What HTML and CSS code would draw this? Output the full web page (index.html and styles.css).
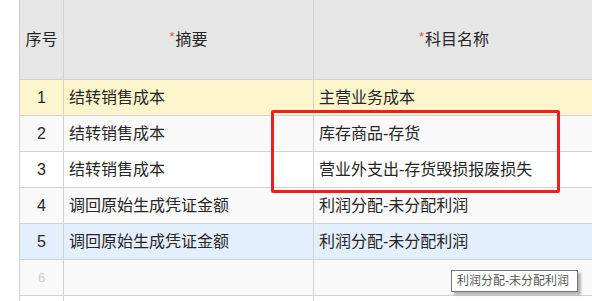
FILE: index.html
```html
<!DOCTYPE html>
<html lang="zh-CN">
<head>
<meta charset="utf-8">
<title>凭证分录</title>
<link rel="stylesheet" href="styles.css">
</head>
<body>
<div class="sheet">
  <div class="grid">
    <div class="row head">
      <div class="cell c1">序号</div>
      <div class="cell c2"><span class="req">*</span>摘要</div>
      <div class="cell c3"><span class="req">*</span>科目名称</div>
    </div>
    <div class="row hl">
      <div class="cell c1 num">1</div>
      <div class="cell c2">结转销售成本</div>
      <div class="cell c3">主营业务成本</div>
    </div>
    <div class="row even">
      <div class="cell c1 num">2</div>
      <div class="cell c2">结转销售成本</div>
      <div class="cell c3">库存商品-存货</div>
    </div>
    <div class="row">
      <div class="cell c1 num">3</div>
      <div class="cell c2">结转销售成本</div>
      <div class="cell c3">营业外支出-存货毁损报废损失</div>
    </div>
    <div class="row even">
      <div class="cell c1 num">4</div>
      <div class="cell c2">调回原始生成凭证金额</div>
      <div class="cell c3">利润分配-未分配利润</div>
    </div>
    <div class="row sel">
      <div class="cell c1 num">5</div>
      <div class="cell c2">调回原始生成凭证金额</div>
      <div class="cell c3">利润分配-未分配利润</div>
    </div>
    <div class="row even">
      <div class="cell c1 num empty">6</div>
      <div class="cell c2"></div>
      <div class="cell c3"></div>
    </div>
    <div class="row">
      <div class="cell c1 num empty"></div>
      <div class="cell c2"></div>
      <div class="cell c3"></div>
    </div>
  </div>
  <div class="mark"></div>
  <div class="tip">利润分配-未分配利润</div>
</div>
</body>
</html>
```

FILE: styles.css
```css
html, body {
  margin: 0;
  padding: 0;
  background: #ffffff;
  overflow: hidden;
}

.sheet {
  position: relative;
  width: 592px;
  height: 301px;
  overflow: hidden;
  font-family: "Liberation Sans", "Noto Sans CJK SC", sans-serif;
  font-size: 16px;
  color: #262626;
}

.grid {
  margin-left: 19px;
  width: 575px;
  border-left: 1px solid #d2d2d2;
}

.row {
  display: grid;
  grid-template-columns: 44px 250px 281px;
  height: 36px;
}

.cell {
  box-sizing: border-box;
  border-right: 1px solid #d2d2d2;
  border-bottom: 1px solid #d2d2d2;
  display: flex;
  align-items: center;
  padding-left: 5px;
  line-height: 18px;
  white-space: nowrap;
}

.row.head {
  height: 80px;
  background: #e6e6e6;
}

.row.head .cell {
  justify-content: center;
  padding-left: 0;
}

.req {
  color: #f5455f;
  font-size: 13px;
  align-self: flex-start;
  margin-top: 30px;
  margin-right: 1px;
  line-height: 13px;
}

.num {
  justify-content: center;
  padding-left: 0;
}

.num.empty {
  color: #cfcfcf;
  font-size: 13px;
}

.row.even { background: #f9f9f9; }
.row.hl { background: #fdf5cc; }
.row.sel { background: #e3effd; }

.mark {
  position: absolute;
  left: 271px;
  top: 110px;
  width: 289px;
  height: 83px;
  box-sizing: border-box;
  border: 3px solid #f01e1e;
  border-radius: 2px;
}

.tip {
  position: absolute;
  left: 451px;
  top: 270px;
  width: 127px;
  height: 22px;
  box-sizing: border-box;
  border: 1px solid #767676;
  background: #ffffff;
  box-shadow: 3px 3px 2px rgba(0, 0, 0, 0.28);
  font-size: 12px;
  line-height: 20px;
  color: #575757;
  padding-left: 5px;
  white-space: nowrap;
}
```
